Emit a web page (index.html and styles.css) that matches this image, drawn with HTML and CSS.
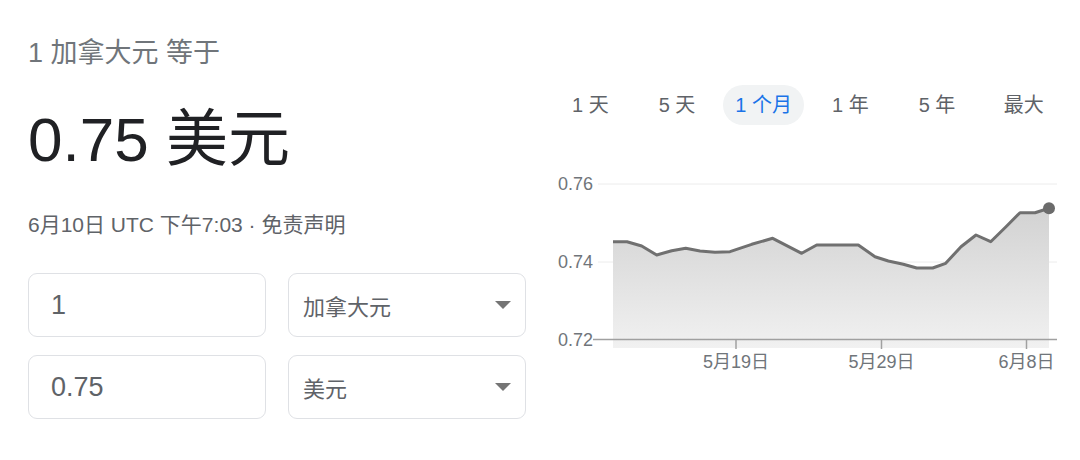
FILE: index.html
```html
<!DOCTYPE html>
<html lang="zh-CN">
<head>
  <meta charset="UTF-8">
  <meta name="viewport" content="width=device-width, initial-scale=1.0">
  <title>加拿大元兑美元</title>
  <link rel="stylesheet" href="styles.css">
</head>
<body>

  <div class="card">

    <!-- Converter -->
    <div class="converter">
      <div class="label">1 加拿大元 等于</div>
      <div class="result">0.75 美元</div>
      <div class="stamp">6月10日 UTC 下午7:03 · 免责声明</div>

      <div class="fields">
        <div class="amount">1</div>
        <div class="currency">加拿大元<span class="arrow"></span></div>
        <div class="amount">0.75</div>
        <div class="currency">美元<span class="arrow"></span></div>
      </div>
    </div>

    <!-- Chart -->
    <div class="chart-panel">
      <ul class="ranges">
        <li><span>1 天</span></li>
        <li><span>5 天</span></li>
        <li><span class="active">1 个月</span></li>
        <li><span>1 年</span></li>
        <li><span>5 年</span></li>
        <li><span>最大</span></li>
      </ul>

      <svg class="chart" width="520" height="220" viewBox="547 165 520 220">
        <defs>
          <linearGradient id="area" x1="0" y1="0" x2="0" y2="1">
            <stop offset="0" stop-color="#d2d2d2"/>
            <stop offset="1" stop-color="#f1f1f1"/>
          </linearGradient>
        </defs>

        <line class="grid" x1="598" y1="184" x2="1057" y2="184"/>
        <line class="grid" x1="598" y1="262" x2="1057" y2="262"/>

        <polygon fill="url(#area)" points="613,348 613,241.7 627,241.7 641.7,246 656.7,255 671.7,250.7 685.7,248.3 700,251 715,252.3 730,251.7 751.7,244.3 772.7,238.3 801.7,253.3 816.7,245 830,245 858.3,245 875,256.7 888.3,261 903.3,264.3 916.7,268 932.7,268 945.7,263.3 961,246.7 976,235 990.7,241.7 1006,226.7 1020,212.7 1035,212.7 1049,208.3 1049,348"/>

        <line class="axis" x1="593" y1="339.5" x2="1057" y2="339.5"/>
        <line class="axis" x1="736" y1="339.5" x2="736" y2="349"/>
        <line class="axis" x1="881.5" y1="339.5" x2="881.5" y2="349"/>
        <line class="axis" x1="1026.5" y1="339.5" x2="1026.5" y2="349"/>

        <polyline class="rate" points="613,241.7 627,241.7 641.7,246 656.7,255 671.7,250.7 685.7,248.3 700,251 715,252.3 730,251.7 751.7,244.3 772.7,238.3 801.7,253.3 816.7,245 830,245 858.3,245 875,256.7 888.3,261 903.3,264.3 916.7,268 932.7,268 945.7,263.3 961,246.7 976,235 990.7,241.7 1006,226.7 1020,212.7 1035,212.7 1049,208.3"/>
        <circle cx="1049" cy="208.3" r="6" fill="#6b6b6b"/>

        <text class="ytick" x="593" y="190">0.76</text>
        <text class="ytick" x="593" y="268">0.74</text>
        <text class="ytick" x="593" y="345.5">0.72</text>

        <text class="xtick" x="736" y="368">5月19日</text>
        <text class="xtick" x="881.5" y="368">5月29日</text>
        <text class="xtick" x="1026.5" y="368">6月8日</text>
      </svg>
    </div>

  </div>

</body>
</html>
```

FILE: styles.css
```css
body {
  margin: 0;
  background: #fff;
  font-family: "Liberation Sans", Arial, "Noto Sans CJK SC", sans-serif;
}

.card {
  display: flex;
  gap: 20px;
  padding-left: 28px;
}

/* left side */
.converter {
  width: 499px;
  padding-top: 37px;
}

.label {
  font-size: 27px;
  line-height: 32px;
  color: #70757a;
}

.result {
  margin-top: 35px;
  font-size: 62px;
  line-height: 72px;
  color: #202124;
}

.stamp {
  margin-top: 37px;
  font-size: 21px;
  line-height: 24px;
  color: #5f6368;
}

.fields {
  margin-top: 36px;
  display: grid;
  grid-template-columns: 238px 238px;
  gap: 18px 22px;
}

.amount,
.currency {
  height: 64px;
  box-sizing: border-box;
  border: 1px solid #dfe1e5;
  border-radius: 9px;
  display: flex;
  align-items: center;
  color: #5f6368;
}

.amount {
  padding-left: 22px;
  font-size: 27px;
}

.currency {
  padding: 0 14px;
  justify-content: space-between;
  font-size: 22px;
}

.arrow {
  border-left: 8px solid transparent;
  border-right: 8px solid transparent;
  border-top: 8px solid #757575;
}

/* right side */
.chart-panel {
  width: 520px;
}

.ranges {
  list-style: none;
  margin: 85px 0 0;
  padding: 0;
  display: grid;
  grid-template-columns: repeat(6, 1fr);
}

.ranges li {
  display: flex;
  justify-content: center;
}

.ranges span {
  height: 40px;
  line-height: 40px;
  padding: 0 12px;
  border-radius: 20px;
  font-size: 20px;
  color: #5f6368;
}

.ranges .active {
  background: #f1f3f4;
  color: #1a73e8;
}

.chart {
  display: block;
  margin-top: 40px;
}

.grid {
  stroke: #ececec;
  stroke-width: 1;
}

.axis {
  stroke: #a0a0a0;
  stroke-width: 1.5;
}

.rate {
  fill: none;
  stroke: #707070;
  stroke-width: 3;
  stroke-linejoin: round;
}

.ytick,
.xtick {
  font-size: 18px;
  fill: #70757a;
}

.ytick {
  text-anchor: end;
}

.xtick {
  text-anchor: middle;
}
```
